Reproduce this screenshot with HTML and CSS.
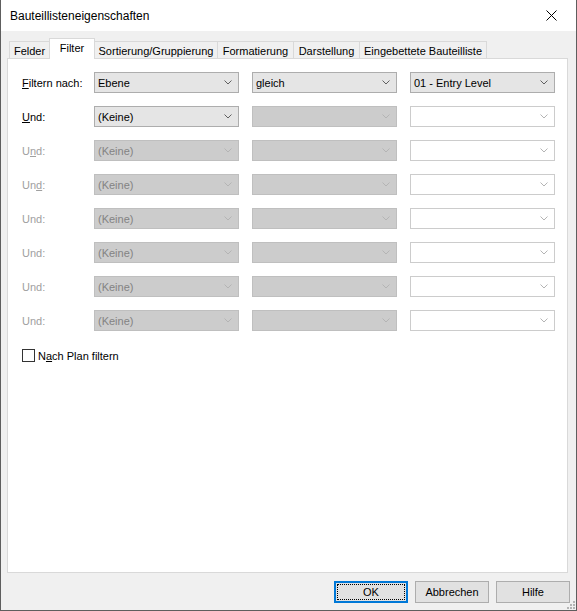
FILE: index.html
```html
<!DOCTYPE html>
<html lang="de">
<head>
<meta charset="utf-8">
<title>Bauteillisteneigenschaften</title>
<link rel="stylesheet" href="styles.css">
</head>
<body>
<div class="window">
  <div class="titlebar">
    <span class="title">Bauteillisteneigenschaften</span>
    <svg class="close" width="11" height="11" viewBox="0 0 11 11"><path d="M0.5 0.5L10.5 10.5M10.5 0.5L0.5 10.5" stroke="#000" stroke-width="1" fill="none"/></svg>
  </div>
  <div class="body">
    <div class="tabs">
      <div class="tab w-felder">Felder</div>
      <div class="tab active w-filter">Filter</div>
      <div class="tab w-sort">Sortierung/Gruppierung</div>
      <div class="tab w-format">Formatierung</div>
      <div class="tab w-darst">Darstellung</div>
      <div class="tab w-eing">Eingebettete Bauteilliste</div>
    </div>
    <div class="panel">
      <div class="grid">
        <div class="label"><u>F</u>iltern nach:</div>
        <div class="combo"><span>Ebene</span><svg class="chev" width="8" height="5" viewBox="0 0 8 5"><path d="M0.5 0.5L4 4L7.5 0.5" stroke="#606060" fill="none"/></svg></div>
        <div class="combo"><span>gleich</span><svg class="chev" width="8" height="5" viewBox="0 0 8 5"><path d="M0.5 0.5L4 4L7.5 0.5" stroke="#606060" fill="none"/></svg></div>
        <div class="combo"><span>01 - Entry Level</span><svg class="chev" width="8" height="5" viewBox="0 0 8 5"><path d="M0.5 0.5L4 4L7.5 0.5" stroke="#606060" fill="none"/></svg></div>

        <div class="label"><u>U</u>nd:</div>
        <div class="combo"><span>(Keine)</span><svg class="chev" width="8" height="5" viewBox="0 0 8 5"><path d="M0.5 0.5L4 4L7.5 0.5" stroke="#606060" fill="none"/></svg></div>
        <div class="combo disabled"><span></span><svg class="chev" width="8" height="5" viewBox="0 0 8 5"><path d="M0.5 0.5L4 4L7.5 0.5" stroke="#b4b4b4" fill="none"/></svg></div>
        <div class="combo blank"><span></span><svg class="chev" width="8" height="5" viewBox="0 0 8 5"><path d="M0.5 0.5L4 4L7.5 0.5" stroke="#b4b4b4" fill="none"/></svg></div>

        <div class="label off">U<u>n</u>d:</div>
        <div class="combo disabled"><span>(Keine)</span><svg class="chev" width="8" height="5" viewBox="0 0 8 5"><path d="M0.5 0.5L4 4L7.5 0.5" stroke="#b4b4b4" fill="none"/></svg></div>
        <div class="combo disabled"><span></span><svg class="chev" width="8" height="5" viewBox="0 0 8 5"><path d="M0.5 0.5L4 4L7.5 0.5" stroke="#b4b4b4" fill="none"/></svg></div>
        <div class="combo blank"><span></span><svg class="chev" width="8" height="5" viewBox="0 0 8 5"><path d="M0.5 0.5L4 4L7.5 0.5" stroke="#b4b4b4" fill="none"/></svg></div>

        <div class="label off">Un<u>d</u>:</div>
        <div class="combo disabled"><span>(Keine)</span><svg class="chev" width="8" height="5" viewBox="0 0 8 5"><path d="M0.5 0.5L4 4L7.5 0.5" stroke="#b4b4b4" fill="none"/></svg></div>
        <div class="combo disabled"><span></span><svg class="chev" width="8" height="5" viewBox="0 0 8 5"><path d="M0.5 0.5L4 4L7.5 0.5" stroke="#b4b4b4" fill="none"/></svg></div>
        <div class="combo blank"><span></span><svg class="chev" width="8" height="5" viewBox="0 0 8 5"><path d="M0.5 0.5L4 4L7.5 0.5" stroke="#b4b4b4" fill="none"/></svg></div>

        <div class="label off">Und:</div>
        <div class="combo disabled"><span>(Keine)</span><svg class="chev" width="8" height="5" viewBox="0 0 8 5"><path d="M0.5 0.5L4 4L7.5 0.5" stroke="#b4b4b4" fill="none"/></svg></div>
        <div class="combo disabled"><span></span><svg class="chev" width="8" height="5" viewBox="0 0 8 5"><path d="M0.5 0.5L4 4L7.5 0.5" stroke="#b4b4b4" fill="none"/></svg></div>
        <div class="combo blank"><span></span><svg class="chev" width="8" height="5" viewBox="0 0 8 5"><path d="M0.5 0.5L4 4L7.5 0.5" stroke="#b4b4b4" fill="none"/></svg></div>

        <div class="label off">Und:</div>
        <div class="combo disabled"><span>(Keine)</span><svg class="chev" width="8" height="5" viewBox="0 0 8 5"><path d="M0.5 0.5L4 4L7.5 0.5" stroke="#b4b4b4" fill="none"/></svg></div>
        <div class="combo disabled"><span></span><svg class="chev" width="8" height="5" viewBox="0 0 8 5"><path d="M0.5 0.5L4 4L7.5 0.5" stroke="#b4b4b4" fill="none"/></svg></div>
        <div class="combo blank"><span></span><svg class="chev" width="8" height="5" viewBox="0 0 8 5"><path d="M0.5 0.5L4 4L7.5 0.5" stroke="#b4b4b4" fill="none"/></svg></div>

        <div class="label off">Und:</div>
        <div class="combo disabled"><span>(Keine)</span><svg class="chev" width="8" height="5" viewBox="0 0 8 5"><path d="M0.5 0.5L4 4L7.5 0.5" stroke="#b4b4b4" fill="none"/></svg></div>
        <div class="combo disabled"><span></span><svg class="chev" width="8" height="5" viewBox="0 0 8 5"><path d="M0.5 0.5L4 4L7.5 0.5" stroke="#b4b4b4" fill="none"/></svg></div>
        <div class="combo blank"><span></span><svg class="chev" width="8" height="5" viewBox="0 0 8 5"><path d="M0.5 0.5L4 4L7.5 0.5" stroke="#b4b4b4" fill="none"/></svg></div>

        <div class="label off">Und:</div>
        <div class="combo disabled"><span>(Keine)</span><svg class="chev" width="8" height="5" viewBox="0 0 8 5"><path d="M0.5 0.5L4 4L7.5 0.5" stroke="#b4b4b4" fill="none"/></svg></div>
        <div class="combo disabled"><span></span><svg class="chev" width="8" height="5" viewBox="0 0 8 5"><path d="M0.5 0.5L4 4L7.5 0.5" stroke="#b4b4b4" fill="none"/></svg></div>
        <div class="combo blank"><span></span><svg class="chev" width="8" height="5" viewBox="0 0 8 5"><path d="M0.5 0.5L4 4L7.5 0.5" stroke="#b4b4b4" fill="none"/></svg></div>
      </div>
      <div class="check"><span class="box"></span><span>N<u>a</u>ch Plan filtern</span></div>
    </div>
    <div class="buttons">
      <div class="btn focus"><span class="focusring">OK</span></div>
      <div class="btn">Abbrechen</div>
      <div class="btn">Hilfe</div>
    </div>
  </div>
  <svg class="grip" width="8" height="8" viewBox="0 0 8 8">
    <rect x="6" y="0" width="2" height="2" fill="#b4b4b4"/>
    <rect x="3" y="3" width="2" height="2" fill="#b4b4b4"/>
    <rect x="6" y="3" width="2" height="2" fill="#b4b4b4"/>
    <rect x="0" y="6" width="2" height="2" fill="#b4b4b4"/>
    <rect x="3" y="6" width="2" height="2" fill="#b4b4b4"/>
    <rect x="6" y="6" width="2" height="2" fill="#b4b4b4"/>
  </svg>
</div>
</body>
</html>
```

FILE: styles.css
```css
html, body {
  margin: 0;
  padding: 0;
  background: #4a4a4a;
}
body {
  font-family: "Liberation Sans", Arial, sans-serif;
  font-size: 11px;
  color: #000;
}
.window {
  position: relative;
  width: 577px;
  height: 611px;
  box-sizing: border-box;
  border: 1px solid #5e5e5e;
  border-top: none;
  background: #f0f0f0;
  display: flex;
  flex-direction: column;
}
.titlebar {
  height: 31px;
  background: #fff;
  display: flex;
  align-items: center;
  justify-content: space-between;
  padding: 0 19px 0 9px;
  flex: none;
}
.title {
  font-size: 12px;
  padding-top: 1px;
}
.close {
  display: block;
}
.body {
  flex: 1;
  display: flex;
  flex-direction: column;
  padding: 7px 8px 0 6px;
}
.tabs {
  display: flex;
  align-items: flex-end;
  height: 20px;
  padding-left: 2px;
}
.tab {
  box-sizing: border-box;
  height: 17px;
  border: 1px solid #d9d9d9;
  border-bottom: none;
  background: #f0f0f0;
  margin-left: -1px;
  display: flex;
  align-items: center;
  justify-content: center;
  padding-top: 1px;
  white-space: nowrap;
}
.tab:first-child { margin-left: 0; }
.tab.active {
  height: 21px;
  margin-bottom: -1px;
  background: #fff;
  position: relative;
  z-index: 1;
  padding-bottom: 3px;
}
.w-felder { width: 41px; }
.w-filter { width: 46px; }
.w-sort { width: 124px; }
.w-format { width: 77px; }
.w-darst { width: 67px; }
.w-eing { width: 128px; }

.panel {
  height: 515px;
  box-sizing: border-box;
  border: 1px solid #d9d9d9;
  background: #fff;
  padding: 13px 0 0 14px;
}
.grid {
  display: grid;
  grid-template-columns: 59px 145px 145px 145px;
  column-gap: 13px;
  row-gap: 13px;
  grid-auto-rows: 21px;
}
.grid .label {
  display: flex;
  align-items: center;
  white-space: nowrap;
}
.label.off { color: #a0a0a0; }
.combo {
  box-sizing: border-box;
  height: 21px;
  border: 1px solid #adadad;
  background: #e5e5e5;
  display: flex;
  align-items: center;
  justify-content: space-between;
  padding: 0 6px 0 3px;
}
.combo.disabled {
  background: #cccccc;
  border-color: #bfbfbf;
  color: #838383;
}
.combo.blank {
  background: #fff;
  border-color: #cccccc;
}
.chev { display: block; flex: none; }

.check {
  margin-top: 18px;
  display: flex;
  align-items: center;
  gap: 3px;
}
.box {
  width: 13px;
  height: 13px;
  box-sizing: border-box;
  border: 1px solid #333;
  background: #fff;
}

.buttons {
  display: flex;
  justify-content: flex-end;
  gap: 7px;
  margin-top: 8px;
  margin-right: -2px;
}
.btn {
  box-sizing: border-box;
  width: 74px;
  height: 22px;
  border: 1px solid #adadad;
  background: #e1e1e1;
  display: flex;
  align-items: center;
  justify-content: center;
}
.btn.focus {
  border: 2px solid #0078d7;
  align-items: stretch;
  padding: 1px;
}
.focusring {
  flex: 1;
  border: 1px dotted #000;
  display: flex;
  align-items: center;
  justify-content: center;
}
.grip {
  position: absolute;
  right: 1px;
  bottom: 1px;
}
```
